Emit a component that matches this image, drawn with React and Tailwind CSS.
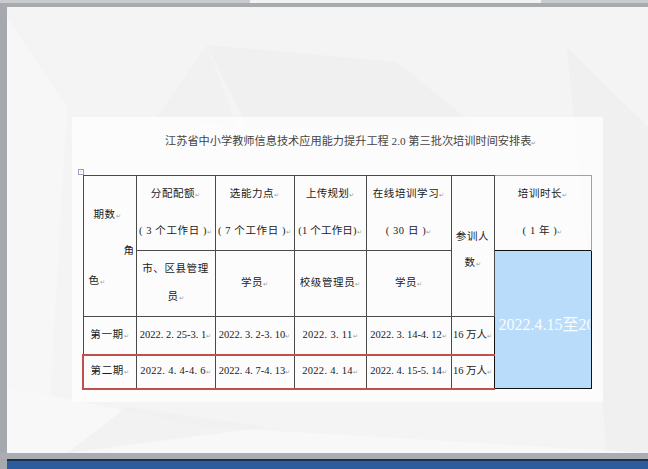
const serif = { fontFamily: '"Liberation Serif", "Noto Sans CJK SC", serif' };

const Mark = () => <span className="text-[6px] text-[#9a9a9a] tracking-normal">↵</span>;

const Cell = ({ children, className = '', lead = 'leading-[35px]', track = 'tracking-[0.6px]', ...rest }) => (
  <td
    {...rest}
    className={`border border-[#4a4a4a] text-center align-middle text-[10.5px] text-[#1a1a1a] whitespace-nowrap p-0 ${lead} ${track} ${className}`}
  >
    {children}
  </td>
);

const red = 'border-t-2 border-b-2 border-t-[#c0504d] border-b-[#c0504d]';

const Background = () => (
  <svg className="absolute inset-0 w-full h-full" viewBox="0 0 641 446" preserveAspectRatio="none">
    <rect width="641" height="446" fill="#f4f4f4" />
    <polygon points="0,10 60,100 40,446 0,446" fill="#f7f7f7" />
    <polygon points="200,38 390,55 470,120 240,120" fill="#eeeeee" opacity="0.7" />
    <polygon points="150,110 200,38 230,120" fill="#f0f0f0" opacity="0.7" />
    <polygon points="560,40 641,120 641,446 600,446" fill="#efefef" opacity="0.8" />
    <polygon points="0,380 200,420 641,446 0,446" fill="#f8f8f8" />
    <polygon points="120,400 260,420 60,446" fill="#eeeeee" opacity="0.6" />
  </svg>
);

export default function App() {
  return (
    <div className="w-[648px] h-[469px] overflow-hidden bg-[#a7abb0] flex flex-col" style={serif}>
      {/* top strip */}
      <div className="h-[7px] flex flex-col">
        <div className="h-[3px] bg-[#c9cbce] flex">
          <div className="w-[250px]" />
          <div className="w-[291px] bg-[#f2f2f2]" />
        </div>
      </div>

      <div className="flex h-[446px]">
        <div className="w-[7px] bg-[#a5a9ae]" />
        <div className="relative flex-1 overflow-hidden">
          <Background />
          {/* document page */}
          <div className="relative ml-[65px] mt-[110px] w-[531px] h-[285px] bg-white/70 pl-[10px]">
            <div className="pt-[16px] pl-[83px] text-[11.2px] text-[#444] whitespace-nowrap">
              江苏省中小学教师信息技术应用能力提升工程 2.0 第三批次培训时间安排表<Mark />
            </div>
            <div className="relative mt-[25px]">
              <span className="absolute -left-[4px] -top-[6px] w-[6px] h-[6px] border border-[#9aa0c0] text-[5px] leading-[4px] text-center text-[#666]">+</span>
              <table className="border-collapse table-fixed w-[508px]">
                <colgroup>
                  <col className="w-[53px]" />
                  <col className="w-[79px]" />
                  <col className="w-[79px]" />
                  <col className="w-[72px]" />
                  <col className="w-[85px]" />
                  <col className="w-[43px]" />
                  <col className="w-[97px]" />
                </colgroup>
                <tbody>
                  <tr className="h-[72px]">
                    <Cell rowSpan={2} lead="leading-none" className="text-left">
                      <div className="relative h-[132px]">
                        <span className="absolute left-[10px] top-[30px]">期数<Mark /></span>
                        <span className="absolute left-[40px] top-[66px]">角</span>
                        <span className="absolute left-[5px] top-[96px]">色<Mark /></span>
                      </div>
                    </Cell>
                    <Cell>分配配额<Mark /><br />( 3 个工作日 )<Mark /></Cell>
                    <Cell>选能力点<Mark /><br />( 7 个工作日 )<Mark /></Cell>
                    <Cell track="tracking-[0.2px]">上传规划<Mark /><br />(1 个工作日)<Mark /></Cell>
                    <Cell>在线培训学习<Mark /><br />( 30 日 )<Mark /></Cell>
                    <Cell rowSpan={2} lead="leading-[26px]">
                      <div className="pt-[10px]">参训人<br />数<Mark /></div>
                    </Cell>
                    <Cell className="border-[#a0a0a0] border-b-0">培训时长<Mark /><br />( 1 年 )<Mark /></Cell>
                  </tr>
                  <tr className="h-[66px]">
                    <Cell lead="leading-[28px]">市、区县管理<br />员<Mark /></Cell>
                    <Cell>学员<Mark /></Cell>
                    <Cell>校级管理员<Mark /></Cell>
                    <Cell>学员<Mark /></Cell>
                    <td rowSpan={3} className="p-0 border-[1.5px] border-[#111] bg-[#b9dcfb] align-middle">
                      <div className="w-[95px] overflow-hidden whitespace-nowrap text-[16px] leading-[20px] text-white/90 pl-[4px] pt-[10px]">
                        2022.4.15至2023.4.14
                      </div>
                    </td>
                  </tr>
                  <tr className="h-[38px]">
                    <Cell>第一期<Mark /></Cell>
                    <Cell track="tracking-normal">2022. 2. 25-3. 1<Mark /></Cell>
                    <Cell track="tracking-normal">2022. 3. 2-3. 10<Mark /></Cell>
                    <Cell track="tracking-[0.3px]">2022. 3. 11<Mark /></Cell>
                    <Cell track="tracking-normal">2022. 3. 14-4. 12<Mark /></Cell>
                    <Cell track="tracking-normal">16 万人<Mark /></Cell>
                  </tr>
                  <tr className="h-[34px]">
                    <Cell lead="leading-[30px]" className={`${red} border-l-2 border-l-[#c0504d]`}>第二期<Mark /></Cell>
                    <Cell lead="leading-[30px]" track="tracking-[0.3px]" className={red}>2022. 4. 4-4. 6<Mark /></Cell>
                    <Cell lead="leading-[30px]" track="tracking-normal" className={red}>2022. 4. 7-4. 13<Mark /></Cell>
                    <Cell lead="leading-[30px]" track="tracking-[0.3px]" className={red}>2022. 4. 14<Mark /></Cell>
                    <Cell lead="leading-[30px]" track="tracking-normal" className={red}>2022. 4. 15-5. 14<Mark /></Cell>
                    <Cell lead="leading-[30px]" track="tracking-normal" className={red}>16 万人<Mark /></Cell>
                  </tr>
                </tbody>
              </table>
            </div>
          </div>
        </div>
      </div>

      {/* bottom bars */}
      <div className="h-[6px] bg-[#a9adb2]" />
      <div className="flex flex-1">
        <div className="w-[7px] bg-[#a5a9ae]" />
        <div className="flex-1 flex flex-col">
          <div className="h-[2px] bg-[#1c2f4f]" />
          <div className="flex-1 bg-[#2c5c9c]" />
        </div>
      </div>
    </div>
  );
}
